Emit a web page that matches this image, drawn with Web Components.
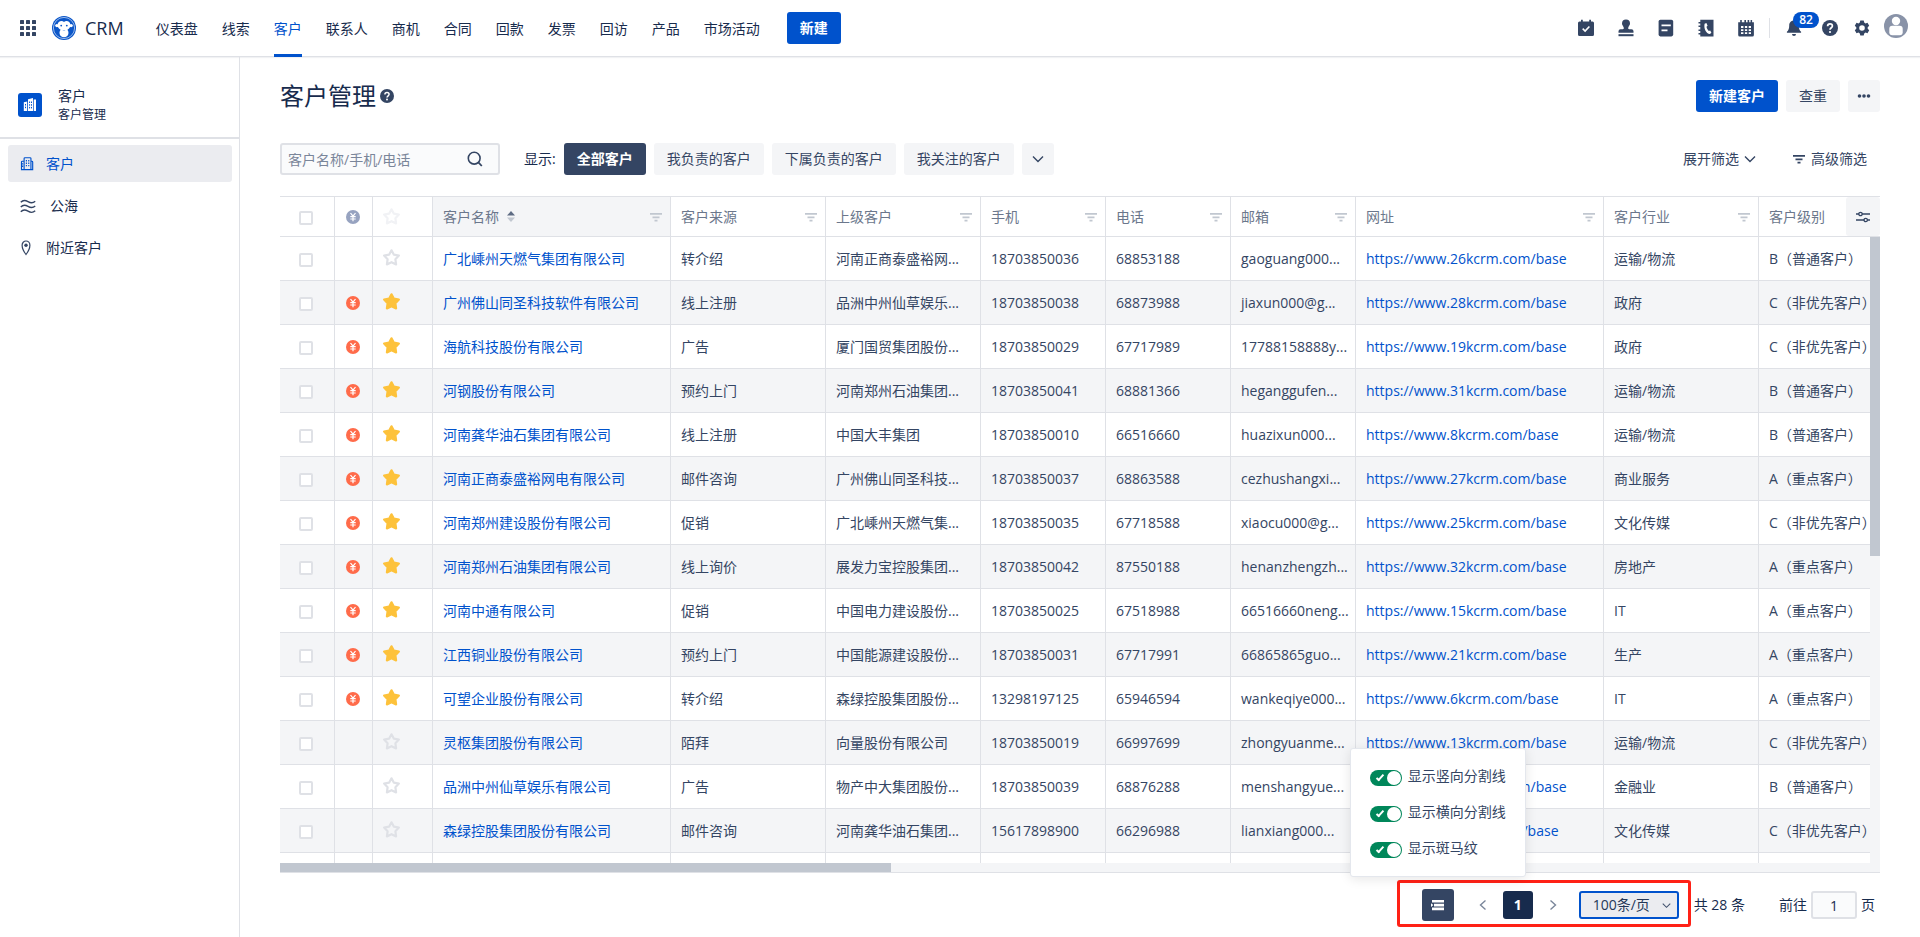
<!DOCTYPE html>
<html lang="zh-CN">
<head>
<meta charset="utf-8">
<title>CRM - 客户管理</title>
<style>
  :root {
    --primary: #0052cc;
    --ink: #172b4d;
    --text: #344563;
    --muted: #6b778c;
    --line: #dfe1e6;
    --fill: #f4f5f7;
    --dark: #344563;
  }
  body {
    margin: 0;
    background: #fff;
    color: var(--ink);
    font: 14px/20px "Open Sans", "Noto Sans CJK SC", sans-serif;
  }
</style>
</head>
<body>
<crm-app>
  <crm-topbar slot="top"></crm-topbar>
  <crm-sidebar slot="side"></crm-sidebar>
  <crm-page-head></crm-page-head>
  <crm-filter-bar></crm-filter-bar>
  <crm-table></crm-table>
  <crm-pager></crm-pager>
</crm-app>

<script>
const BASE = `
  *, *::before, *::after { box-sizing: border-box; }
  a { color: inherit; text-decoration: none; }
  button, input, select { font: inherit; color: inherit; margin: 0; }
`;

class CrmElement extends HTMLElement {
  connectedCallback() {
    if (this.shadowRoot) return;
    const t = document.createElement('template');
    t.innerHTML = `<style>${BASE}${this.css()}</style>${this.html()}`;
    this.attachShadow({ mode: 'open' }).append(t.content.cloneNode(true));
  }
  css() { return ''; }
  html() { return '<slot></slot>'; }
}

/* name: [width, height, markup] */
const STAR = 'M8.5 1.3 10.9 5.700 15.900 6.600 12.400 10.300 13.100 15.400 8.500 13.200 3.900 15.400 4.600 10.300 1.100 6.600 6.100 5.700Z';
const ICONS = {
  grid: [16, 16, [0, 6, 12].map(y => [0, 6, 12].map(x => `<rect x="${x}" y="${y}" width="4" height="4" rx=".6"/>`).join('')).join('')],
  logo: [24, 24, `<circle cx="12" cy="12" r="12" fill="#0b56c8"/><circle cx="12" cy="12" r="10.6" fill="none" stroke="#b9d0f2" stroke-width=".8"/>
    <g fill="#fff"><circle cx="4.9" cy="9.6" r="1.7"/><circle cx="19.1" cy="9.6" r="1.7"/><path d="M12 6C10 4.200 5.600 5 5.600 9c0 2.800 1.500 3.900 3 4.800-.9 1.200-1.200 2.400-1 3.900.3 2.200 2.200 3.500 4.400 3.500s4.100-1.300 4.400-3.500c.2-1.500-.1-2.700-1-3.900 1.500-.9 3-2 3-4.800C18.400 5 14 4.200 12 6Z"/></g>
    <g fill="#0b56c8"><circle cx="9.200" cy="9.600" r=".9"/><circle cx="14.800" cy="9.600" r=".9"/><circle cx="11.200" cy="14.400" r=".4"/><circle cx="12.800" cy="14.400" r=".4"/></g>`],
  task: [18, 18, `<path d="M2.500 2.500H4V.800h1.800v1.700h6.400V.800H14v1.700h1.500A1.500 1.500 0 0 1 17 4v11.500a1.500 1.500 0 0 1-1.500 1.500h-13A1.500 1.500 0 0 1 1 15.500V4a1.500 1.500 0 0 1 1.500-1.500Z"/><path d="m5.700 9.700 2.400 2.300 4.300-4.500" fill="none" stroke="#fff" stroke-width="1.600"/>`],
  stamp: [18, 18, `<path d="M9 .6a4 4 0 0 1 4 4c0 1.700-1.300 2.600-1.700 4-.3 1 0 1.700 1 1.700h2.200a2 2 0 0 1 2 2v1.500h-15v-1.500a2 2 0 0 1 2-2h2.200c1 0 1.300-.7 1-1.700C6.300 7.200 5 6.300 5 4.600a4 4 0 0 1 4-4Z"/><rect x="1.500" y="15.200" width="15" height="2"/>`],
  doc: [18, 18, `<rect x="1.600" y=".8" width="14.600" height="16.600" rx="1.800"/><path d="M4.500 6.300h9.300M4.500 11.300h6" stroke="#fff" stroke-width="1.800"/>`],
  phone: [18, 18, `<path d="M3.300.8h13.200v16.600H3.300v-2H1.500v-1.500h1.800v-2H1.500v-1.500h1.800v-2.500H1.500V6.400h1.800v-2H1.500V2.900h1.800Z"/><path d="M7.600 4.700 9.400 4l1.200 2.800-1.100 1c.3 1.800 1.100 3.100 2.300 4.100l1.400-.4 1.200 2.300-1.500 1.200C9 14.500 6.600 9.600 7.600 4.700Z" fill="#fff"/>`],
  calendar: [18, 18, `<path d="M1.200 3.200h2V1h1.600v2.200h2.600V1H9v2.200h1.600V1h1.600v2.200h1.400V1h1.500v2.200h1.800V16a1.500 1.500 0 0 1-1.500 1.500H2.700A1.500 1.500 0 0 1 1.200 16Z"/><g fill="#fff"><path d="M4 7h2.400v2H4zM7.900 7h2.300v2H7.900zM11.700 7H14v2h-2.300zM4 10.200h2.400v1.900H4zM7.900 10.200h2.300v1.900H7.900zM11.700 10.200H14v1.900h-2.300zM4 13.300h2.400v1.800H4zM7.900 13.300h2.300v1.800H7.900zM11.700 13.300H14v1.800h-2.300z"/></g>`],
  bell: [18, 18, `<path d="M9 1.500c3 0 4.800 2.200 4.800 5.200 0 3 .7 4.500 2.300 6.100v1H1.900v-1c1.600-1.600 2.300-3.100 2.300-6.100 0-3 1.800-5.200 4.800-5.200ZM7 15h4a2 2 0 0 1-4 0Z"/>`],
  help: [16, 16, `<circle cx="8" cy="8" r="8"/><path d="M5.600 6.300C5.600 4.700 6.600 3.900 8 3.900s2.400.9 2.400 2.200C10.400 7.700 8 7.900 8 9.800" fill="none" stroke="#fff" stroke-width="1.700"/><circle cx="8" cy="12" r="1.100" fill="#fff"/>`],
  gear: [16, 16, `<path fill-rule="evenodd" d="M6.300.6h3.400l.5 2 1.300.8 2-.6 1.700 2.900-1.500 1.500v1.600l1.500 1.500-1.700 2.900-2-.6-1.300.8-.5 2H6.300l-.5-2-1.300-.8-2 .6L.8 10.300l1.500-1.500V7.200L.8 5.700l1.700-2.900 2 .6 1.300-.8ZM8 5.200A2.800 2.800 0 1 0 8 10.800 2.800 2.800 0 0 0 8 5.200Z"/>`],
  avatar: [24, 24, `<circle cx="12" cy="12" r="12" fill="#8993a8"/><circle cx="12" cy="7" r="4.200" fill="#fff"/><rect x="5.300" y="11.800" width="13.400" height="9.400" rx="3" fill="#fff"/>`],
  building: [16, 16, `<path d="M5.700.8h5.800a1 1 0 0 1 1 1v12.700H4.700V1.800a1 1 0 0 1 1-1ZM4.700 4.800h-2a1 1 0 0 0-1 1v8.700h3M12.500 4.800h1a1 1 0 0 1 1 1v8.700h-2" fill="none" stroke="currentColor" stroke-width="1.300"/><path d="M7.300 3.500v8.500M10 3.500v8.500M3 7v5" stroke="currentColor" stroke-width="1.300" stroke-dasharray="1.600 1.200"/>`],
  buildingSolid: [14, 14, `<path d="M5 1.200 10 0v13H5ZM.8 4.300 4.200 3.400V13H.8ZM10.700 1.500H13V13h-2.300Z"/><path d="M6.600 3.500v7M8.500 3.500v7M2.500 6v5" stroke="#0052cc" stroke-width="1" stroke-dasharray="1.500 1.200"/>`],
  waves: [16, 14, `<path d="M.8 3.200C3 .800 5 .8 8 2.600s5 1.700 7.200-.4M.8 8C3 5.600 5 5.600 8 7.400s5 1.700 7.200-.4M.8 12.800C3 10.400 5 10.400 8 12.200s5 1.700 7.200-.4" fill="none" stroke="currentColor" stroke-width="1.400"/>`],
  pin: [12, 16, `<path d="M6 1a3.900 4.300 0 0 1 3.900 4.300c0 3.400-1.600 6.300-3.900 9.200-2.300-2.900-3.900-5.800-3.900-9.200A3.900 4.300 0 0 1 6 1Z" fill="none" stroke="currentColor" stroke-width="1.200"/><circle cx="6" cy="5.300" r="1.700"/>`],
  search: [16, 16, `<circle cx="7.200" cy="7.200" r="5.900" fill="none" stroke="currentColor" stroke-width="1.600"/><path d="m11.400 11.400 3.400 3.600" stroke="currentColor" stroke-width="1.800"/>`],
  down: [12, 12, `<path d="m1 3.500 5 5 5-5" fill="none" stroke="currentColor" stroke-width="1.400"/>`],
  left: [12, 12, `<path d="m8.500 1.500-5 4.500 5 4.500" fill="none" stroke="currentColor" stroke-width="1.400"/>`],
  right: [12, 12, `<path d="m3.500 1.500 5 4.500-5 4.500" fill="none" stroke="currentColor" stroke-width="1.400"/>`],
  more: [14, 4, `<circle cx="2.500" cy="2" r="1.800"/><circle cx="7" cy="2" r="1.800"/><circle cx="11.500" cy="2" r="1.800"/>`],
  filter: [12, 10, `<path d="M0 1h12v1.700H0zM2.500 4.500h7v1.700h-7zM4.500 7.800h3v1.700h-3z"/>`],
  sort: [8, 12, `<path d="M4 0 8 4.500H0Z" fill="#5e6c84"/><path d="M4 11 8 6.500H0Z" fill="#c1c7d0"/>`],
  yen: [14, 14, `<circle cx="7" cy="7" r="7"/><path d="m4.500 3 2.500 3.200L9.500 3M7 6.200V11.300M4.300 6.700h5.400M4.300 9h5.400" fill="none" stroke="#fff" stroke-width="1.200"/>`],
  star: [17, 17, `<path d="${STAR}" stroke="currentColor" stroke-width="2.200" stroke-linejoin="round"/>`],
  starLine: [17, 17, `<path d="${STAR}" fill="none" stroke="currentColor" stroke-width="2.200" stroke-linejoin="round"/>`],
  tune: [14, 12, `<path d="M0 3h14M0 9h14" stroke="currentColor" stroke-width="1.400"/><circle cx="4.500" cy="3" r="1.700" fill="#f4f5f7" stroke="currentColor" stroke-width="1.300"/><circle cx="9.700" cy="9" r="1.700" fill="#f4f5f7" stroke="currentColor" stroke-width="1.300"/>`],
  rows: [14, 12, `<path d="M1 1h12v2.600H1zM3 4.800h10v2.600H3zM1 8.600h12v2.600H1z"/><path d="m0 4.300 2.400 1.800L0 7.900Z"/>`]
};

customElements.define('crm-icon', class extends CrmElement {
  css() { return ':host { display: inline-flex; flex: none; } svg { display: block; overflow: visible; }'; }
  html() {
    const [w, h, body] = ICONS[this.getAttribute('name')];
    const s = Number(this.getAttribute('size')) || w;
    return `<svg width="${s}" height="${Math.round(s * h / w)}" viewBox="0 0 ${w} ${h}" fill="currentColor" aria-hidden="true">${body}</svg>`;
  }
});

customElements.define('crm-button', class extends CrmElement {
  css() { return `
    :host { display: inline-flex; flex: none; }
    button { height: 32px; min-width: 32px; padding: 0 13px; border: 0; border-radius: 3px; background: var(--fill);
      color: var(--text); line-height: 32px; display: flex; align-items: center; justify-content: center; white-space: nowrap; }
    :host([kind=primary]) button { background: var(--primary); color: #fff; font-weight: 700; }
    :host([kind=selected]) button { background: var(--dark); color: #fff; font-weight: 700; }
    :host([square]) button { padding: 0; width: 32px; }
  `; }
  html() {
    const l = this.getAttribute('label');
    return `<button type="button"${l ? ` aria-label="${l}"` : ''}><slot></slot></button>`;
  }
});

customElements.define('crm-app', class extends CrmElement {
  css() { return `
    :host { display: grid; grid-template: auto minmax(0, 1fr) / 240px minmax(0, 1fr); height: 100vh; }
    header { grid-column: 1 / -1; }
    main { display: flex; flex-direction: column; padding: 0 40px; min-width: 0; min-height: 0; }
  `; }
  html() { return `<header><slot name="top"></slot></header><slot name="side"></slot><main><slot></slot></main>`; }
});

customElements.define('crm-topbar', class extends CrmElement {
  css() { return `
    :host { display: flex; align-items: center; height: 56px; padding: 0 12px 0 20px; border-bottom: 1px solid var(--line); box-shadow: 0 1px 1px rgba(9,30,66,.06); }
    crm-icon { color: var(--dark); }
    .brand { display: flex; align-items: center; gap: 9px; margin: 0 32px 0 16px; font-size: 18px; line-height: 24px; }
    nav { display: flex; gap: 24px; align-self: stretch; margin-right: 27px; }
    nav a { display: flex; align-items: center; height: 57px; padding-top: 3px; border-bottom: 3px solid transparent; white-space: nowrap; }
    nav a[aria-current] { color: var(--primary); border-color: var(--primary); }
    .tools { display: flex; align-items: center; margin-left: auto; }
    .tools a { display: flex; position: relative; }
    .apps { display: flex; gap: 22px; padding-right: 14px; border-right: 1px solid var(--line); height: 20px; align-items: center; }
    .user { display: flex; align-items: center; gap: 16px; padding-left: 15px; }
    .bell { margin-right: 3px; }
    .badge { position: absolute; left: 8px; top: -7px; width: 26px; height: 16px; border-radius: 8px; background: var(--primary); color: #fff; font-size: 12px; font-weight: 600; line-height: 16px; text-align: center; }
    .avatar { margin: 0 0 4px -2px; }
  `; }
  html() {
    const nav = ['仪表盘','线索','客户','联系人','商机','合同','回款','发票','回访','产品','市场活动'];
    const apps = [['task','任务'],['stamp','审批'],['doc','日志'],['phone','通讯录'],['calendar','日历']];
    return `<crm-icon name="grid"></crm-icon>
      <a class="brand" href="#"><crm-icon name="logo"></crm-icon>CRM</a>
      <nav>${nav.map(n => `<a href="#"${n === '客户' ? ' aria-current="page"' : ''}>${n}</a>`).join('')}</nav>
      <crm-button kind="primary">新建</crm-button>
      <div class="tools">
        <div class="apps">${apps.map(([i, l]) => `<a href="#" aria-label="${l}"><crm-icon name="${i}"></crm-icon></a>`).join('')}</div>
        <div class="user">
          <a class="bell" href="#" aria-label="消息"><crm-icon name="bell"></crm-icon><span class="badge">82</span></a>
          <a href="#" aria-label="帮助"><crm-icon name="help"></crm-icon></a>
          <a href="#" aria-label="设置"><crm-icon name="gear"></crm-icon></a>
          <a class="avatar" href="#" aria-label="个人"><crm-icon name="avatar"></crm-icon></a>
        </div>
      </div>`;
  }
});

customElements.define('crm-sidebar', class extends CrmElement {
  css() { return `
    :host { display: block; border-right: 1px solid var(--line); }
    .head { display: flex; align-items: center; gap: 16px; height: 82px; padding: 16px 0 0 18px; border-bottom: 2px solid var(--line); }
    .mark { display: flex; align-items: center; justify-content: center; width: 24px; height: 24px; border-radius: 3px; background: var(--primary); color: #fff; }
    .head p { margin: 0; font-size: 12px; line-height: 18px; }
    .head p:first-child { font-size: 14px; line-height: 20px; }
    nav { display: grid; gap: 5px; padding: 6px 7px 6px 8px; }
    nav a { display: flex; align-items: center; gap: 12px; height: 37px; padding: 0 12px; border-radius: 3px; }
    nav a[aria-current] { background: #ebecf0; color: var(--primary); }
    nav a:not([aria-current]) { gap: 14px; }
    nav a:not([aria-current]) crm-icon { color: var(--dark); }
  `; }
  html() { return `
    <div class="head"><span class="mark"><crm-icon name="buildingSolid"></crm-icon></span><div><p>客户</p><p>客户管理</p></div></div>
    <nav>
      <a href="#" aria-current="page"><crm-icon name="building" size="14"></crm-icon>客户</a>
      <a href="#"><crm-icon name="waves"></crm-icon>公海</a>
      <a href="#"><crm-icon name="pin"></crm-icon>附近客户</a>
    </nav>`; }
});

customElements.define('crm-page-head', class extends CrmElement {
  css() { return `
    :host { display: flex; align-items: center; gap: 8px; padding: 24px 0 31px; }
    h1 { display: flex; align-items: center; gap: 4px; margin: 0 auto 0 0; font-size: 24px; line-height: 30px; font-weight: 400; }
    h1 crm-icon { color: var(--dark); }
  `; }
  html() { return `<h1>客户管理<crm-icon name="help" size="14"></crm-icon></h1>
    <crm-button kind="primary">新建客户</crm-button><crm-button>查重</crm-button>
    <crm-button square label="更多"><crm-icon name="more"></crm-icon></crm-button>`; }
});

customElements.define('crm-filter-bar', class extends CrmElement {
  css() { return `
    :host { display: flex; align-items: center; gap: 8px; padding-bottom: 21px; }
    .search { position: relative; display: flex; flex: none; color: var(--text); margin-right: 16px; }
    input { width: 220px; height: 32px; padding: 0 40px 0 6px; border: 2px solid var(--line); border-radius: 3px; background: #fafbfc; }
    input::placeholder { color: #7a869a; opacity: 1; }
    .search crm-icon { position: absolute; right: 17px; top: 8px; }
    .more { display: flex; align-items: center; gap: 5px; color: var(--text); white-space: nowrap; }
    .first { margin-left: auto; }
    .last { margin: 0 13px 0 29px; gap: 6px; }
  `; }
  html() { return `
    <label class="search"><input type="text" placeholder="客户名称/手机/电话" aria-label="客户名称/手机/电话"><crm-icon name="search"></crm-icon></label>
    <span>显示:</span>
    <crm-button kind="selected">全部客户</crm-button><crm-button>我负责的客户</crm-button>
    <crm-button>下属负责的客户</crm-button><crm-button>我关注的客户</crm-button>
    <crm-button square label="更多场景"><crm-icon name="down"></crm-icon></crm-button>
    <a class="more first" href="#">展开筛选<crm-icon name="down"></crm-icon></a>
    <a class="more last" href="#"><crm-icon name="filter"></crm-icon>高级筛选</a>`; }
});

const LEVELS = { A: 'A（重点客户）', B: 'B（普通客户）', C: 'C（非优先客户）' };
/* followed, name, source, parent, mobile, phone, mail, site number, industry, level */
const ROWS = [
  [0,'广北嵊州天燃气集团有限公司','转介绍','河南正商泰盛裕网...','18703850036','68853188','gaoguang000...',26,'运输/物流','B'],
  [1,'广州佛山同圣科技软件有限公司','线上注册','品洲中州仙草娱乐...','18703850038','68873988','jiaxun000@g...',28,'政府','C'],
  [1,'海航科技股份有限公司','广告','厦门国贸集团股份...','18703850029','67717989','17788158888y...',19,'政府','C'],
  [1,'河钢股份有限公司','预约上门','河南郑州石油集团...','18703850041','68881366','heganggufen...',31,'运输/物流','B'],
  [1,'河南龚华油石集团有限公司','线上注册','中国大丰集团','18703850010','66516660','huazixun000...',8,'运输/物流','B'],
  [1,'河南正商泰盛裕网电有限公司','邮件咨询','广州佛山同圣科技...','18703850037','68863588','cezhushangxi...',27,'商业服务','A'],
  [1,'河南郑州建设股份有限公司','促销','广北嵊州天燃气集...','18703850035','67718588','xiaocu000@g...',25,'文化传媒','C'],
  [1,'河南郑州石油集团有限公司','线上询价','展发力宝控股集团...','18703850042','87550188','henanzhengzh...',32,'房地产','A'],
  [1,'河南中通有限公司','促销','中国电力建设股份...','18703850025','67518988','66516660neng...',15,'IT','A'],
  [1,'江西铜业股份有限公司','预约上门','中国能源建设股份...','18703850031','67717991','66865865guo...',21,'生产','A'],
  [1,'可望企业股份有限公司','转介绍','森绿控股集团股份...','13298197125','65946594','wankeqiye000...',6,'IT','A'],
  [0,'灵枢集团股份有限公司','陌拜','向量股份有限公司','18703850019','66997699','zhongyuanme...',13,'运输/物流','C'],
  [0,'品洲中州仙草娱乐有限公司','广告','物产中大集团股份...','18703850039','68876288','menshangyue...',29,'金融业','B'],
  [0,'森绿控股集团股份有限公司','邮件咨询','河南龚华油石集团...','15617898900','66296988','lianxiang000...',5,'文化传媒','C']
];

customElements.define('crm-table', class extends CrmElement {
  css() { return `
    :host { display: grid; grid-template-rows: minmax(0, 1fr) 9px; flex: 1; min-height: 0; position: relative; border: solid var(--line); border-width: 1px 0; color: var(--text); }
    .view { overflow: hidden; }
    table { width: 100%; table-layout: fixed; border-collapse: separate; border-spacing: 0; }
    th, td { height: 44px; padding: 1px 0 0 10px; border: solid var(--line); border-width: 0 1px 1px 0; font-weight: 400; text-align: left; white-space: nowrap; overflow: hidden; }
    th { height: 40px; color: var(--muted); }
    th:last-child, td:last-child { border-right: 0; }
    tbody tr:nth-child(even) td, th.sorted { background: var(--fill); }
    td a { color: var(--primary); }
    .cell { display: flex; align-items: center; gap: 8px; padding-right: 8px; }
    .cell .funnel { margin-left: auto; color: #c1c7d0; }
    .pick { padding: 3px 0 0 19px; }
    .pick input { display: block; appearance: none; width: 14px; height: 14px; border: 2px solid var(--line); border-radius: 2px; background: #fff; }
    .coin { padding: 0 0 0 11px; color: #ff6b4a; }
    .fav { color: var(--line); padding: 0 0 2px 10px; }
    .fav.on { color: #fdc23b; }
    .coin crm-icon, .fav crm-icon { display: flex; }
    th.coin { color: #97a3c0; }
    th.fav { color: #f1f2f5; padding-bottom: 0; }
    .tune { position: absolute; top: 0; right: 0; width: 34px; height: 39px; padding: 0; border: 0; border-radius: 3px; background: var(--fill); color: var(--text); display: flex; align-items: center; justify-content: center; }
    .vbar { position: absolute; top: 40px; right: 0; bottom: 9px; width: 10px; background: var(--fill); }
    .vbar i { display: block; height: 51%; background: #c1c7d0; }
    .hbar { background: var(--fill); }
    .hbar i { display: block; width: 611px; height: 100%; background: #c1c7d0; }
  `; }
  html() {
    const widths = [55, 38, 60, 238, 155, 155, 125, 125, 125, 248, 155];
    const heads = ['客户来源','上级客户','手机','电话','邮箱','网址','客户行业'];
    const funnel = '<crm-icon class="funnel" name="filter"></crm-icon>';
    const row = ([on, name, src, up, mob, tel, mail, n, ind, lv]) => `<tr>
      <td class="pick"><input type="checkbox" aria-label="${name}"></td>
      <td class="coin">${on ? '<crm-icon name="yen"></crm-icon>' : ''}</td>
      <td class="fav${on ? ' on' : ''}"><crm-icon name="${on ? 'star' : 'starLine'}"></crm-icon></td>
      <td><a href="#">${name}</a></td><td>${src}</td><td>${up}</td><td>${mob}</td><td>${tel}</td><td>${mail}</td>
      <td><a href="#">https://www.${n}kcrm.com/base</a></td><td>${ind}</td><td>${LEVELS[lv]}</td></tr>`;
    return `<div class="view"><table>
      <colgroup>${widths.map(w => `<col style="width:${w}px">`).join('')}<col></colgroup>
      <thead><tr>
        <th class="pick"><input type="checkbox" aria-label="全选"></th>
        <th class="coin"><crm-icon name="yen"></crm-icon></th>
        <th class="fav"><crm-icon name="starLine"></crm-icon></th>
        <th class="sorted" aria-sort="ascending"><div class="cell">客户名称<crm-icon name="sort"></crm-icon>${funnel}</div></th>
        ${heads.map(h => `<th><div class="cell">${h}${funnel}</div></th>`).join('')}
        <th>客户级别</th>
      </tr></thead>
      <tbody>${ROWS.map(row).join('')}<tr>${'<td></td>'.repeat(12)}</tr></tbody>
    </table></div>
    <div class="hbar"><i></i></div>
    <div class="vbar"><i></i></div>
    <button class="tune" type="button" aria-label="列设置"><crm-icon name="tune"></crm-icon></button>`;
  }
});

customElements.define('crm-switch', class extends CrmElement {
  css() { return `
    :host { display: block; }
    label { display: flex; align-items: center; gap: 6px; height: 20px; color: var(--text); white-space: nowrap; }
    input { appearance: none; position: relative; flex: none; width: 32px; height: 16px; margin-top: 4px; border-radius: 8px; background: #00875a; }
    input::before { content: ""; position: absolute; left: 8px; top: 3px; width: 4px; height: 8px; border: solid #fff; border-width: 0 2px 2px 0; transform: rotate(42deg); }
    input::after { content: ""; position: absolute; right: 1px; top: 1px; width: 14px; height: 14px; border-radius: 50%; background: #fff; }
  `; }
  html() { return `<label><input type="checkbox" role="switch" checked><slot></slot></label>`; }
});

customElements.define('crm-pager', class extends CrmElement {
  css() { return `
    :host { display: flex; flex: none; align-items: center; justify-content: flex-end; height: 64px; padding-right: 5px; white-space: nowrap; }
    .group { position: relative; display: flex; align-items: center; margin-right: 15px; }
    .group::after { content: ""; position: absolute; inset: -9px -12px -6px -25px; border: 3px solid #ff2116; border-radius: 3px; pointer-events: none; }
    button { display: flex; align-items: center; justify-content: center; padding: 0; border: 0; border-radius: 3px; background: none; }
    .set { width: 32px; height: 32px; background: var(--dark); color: #fff; margin-right: 11px; }
    .arrow { width: 30px; height: 28px; color: #7a869a; margin: 0 3px; }
    .page { width: 30px; height: 28px; margin: 0 2px; background: var(--ink); color: #fff; font-weight: 700; }
    .size { position: relative; display: flex; color: #42526e; margin-left: 8px; }
    select { appearance: none; width: 100px; height: 28px; padding: 0 0 0 12px; border: 2px solid var(--primary); border-radius: 3px; background: #ebecf0; line-height: 20px; color: #253858; }
    .size crm-icon { position: absolute; right: 8px; top: 10px; }
    .jump { display: flex; align-items: center; gap: 4px; margin-left: 34px; }
    .jump input { width: 46px; height: 28px; padding: 0; border: 2px solid var(--line); border-radius: 3px; background: #fafbfc; text-align: center; }
    .pop { position: absolute; z-index: 1; left: -72px; bottom: 44px; display: grid; gap: 16px; width: 176px; height: 129px; padding: 17px 19px; align-content: start; border: 1px solid #e4e7ed; border-radius: 3px; background: #fff; box-shadow: 0 2px 12px rgba(0,0,0,.1); }
  `; }
  html() { return `
    <div class="group">
      <div class="pop"><crm-switch>显示竖向分割线</crm-switch><crm-switch>显示横向分割线</crm-switch><crm-switch>显示斑马纹</crm-switch></div>
      <button class="set" type="button" aria-label="表格样式"><crm-icon name="rows"></crm-icon></button>
      <button class="arrow" type="button" aria-label="上一页"><crm-icon name="left"></crm-icon></button>
      <button class="page" type="button">1</button>
      <button class="arrow" type="button" aria-label="下一页"><crm-icon name="right"></crm-icon></button>
      <div class="size"><select aria-label="每页条数"><option>100条/页</option></select><crm-icon name="down" size="9"></crm-icon></div>
    </div>
    <span>共 28 条</span>
    <label class="jump">前往<input type="text" value="1">页</label>`; }
});

document.querySelector('crm-page-head').style.paddingTop = '23px';
</script>
</body>
</html>
